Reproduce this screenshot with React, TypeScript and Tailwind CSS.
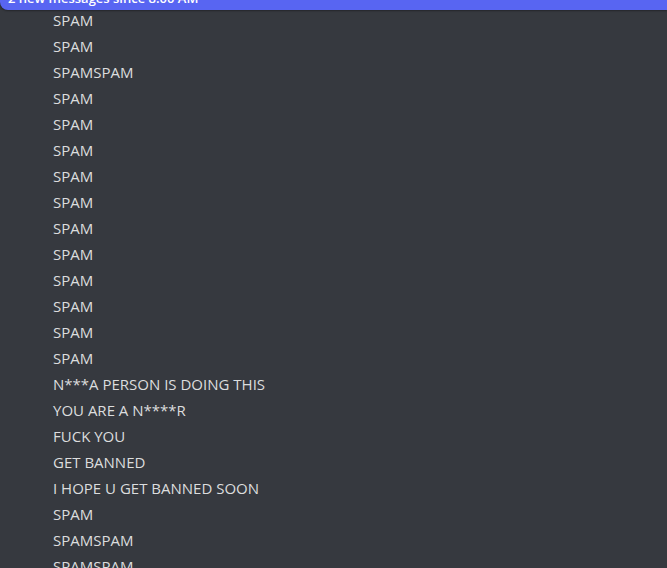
import React from "react";

const messages: string[] = [
  "SPAM",
  "SPAM",
  "SPAMSPAM",
  "SPAM",
  "SPAM",
  "SPAM",
  "SPAM",
  "SPAM",
  "SPAM",
  "SPAM",
  "SPAM",
  "SPAM",
  "SPAM",
  "SPAM",
  "N***A PERSON IS DOING THIS",
  "YOU ARE A N****R",
  "FUCK YOU",
  "GET BANNED",
  "I HOPE U GET BANNED SOON",
  "SPAM",
  "SPAMSPAM",
  "SPAMSPAM",
];

export default function App() {
  return (
    <div
      className="relative h-[568px] w-[667px] overflow-hidden bg-[#36393f]"
      style={{ fontFamily: '"Open Sans", "Noto Sans", sans-serif' }}
    >
      <div className="absolute left-0 right-0 top-[-13px] z-10 flex h-[23px] items-center rounded-bl-lg bg-[#5865f2] pl-[8px] text-[13px] font-semibold text-white shadow-[0_1px_2px_rgba(0,0,0,0.35)]">
        2 new messages since 8:00 AM
      </div>
      <div className="flex flex-col pt-[7px]">
        {messages.map((m, i) => (
          <div
            key={i}
            className="h-[26px] pl-[53px] text-[15px] leading-[26px] text-[#dcddde]"
          >
            {m}
          </div>
        ))}
      </div>
    </div>
  );
}
